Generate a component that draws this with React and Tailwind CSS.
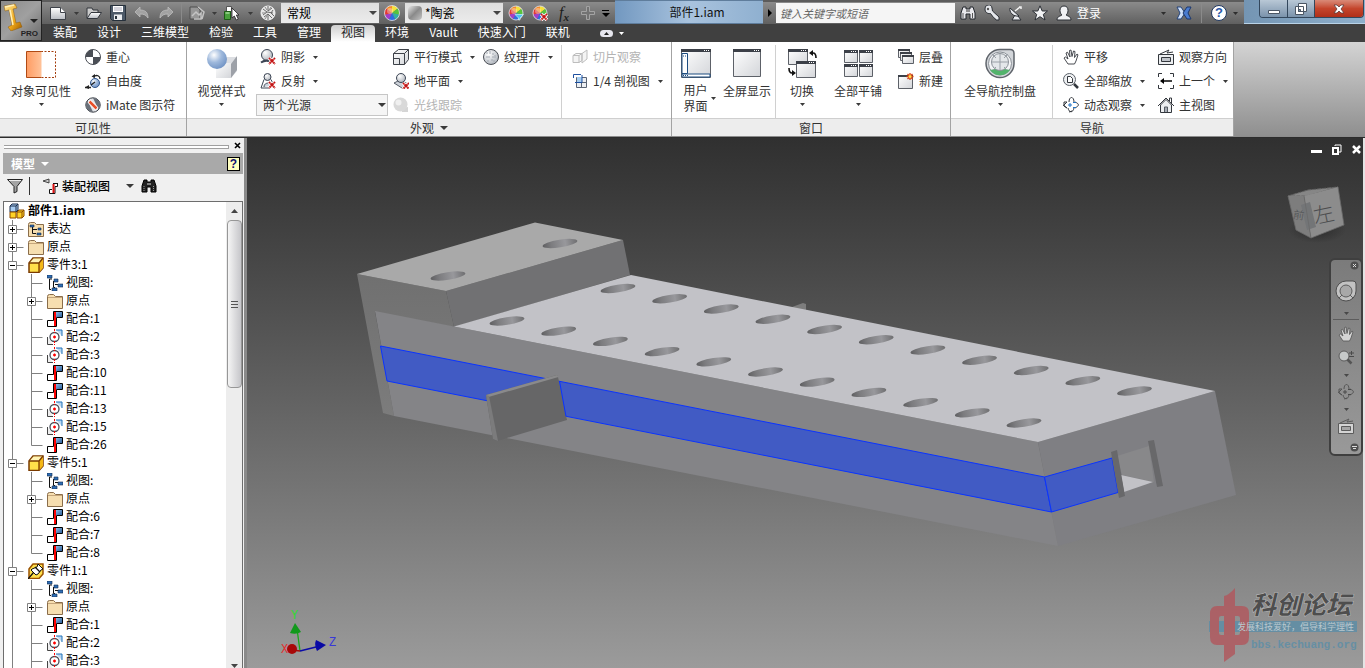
import { useState } from 'react'

/* ---------- icon helpers ---------- */

const Svg = ({ size = 16, w, h, children, className = '' }) => (
  <svg
    width={w || size}
    height={h || size}
    viewBox={`0 0 ${w || size} ${h || size}`}
    className={`shrink-0 ${className}`}
    fill="none"
    aria-hidden="true"
  >
    {children}
  </svg>
)

const Caret = ({ className = 'text-[#3a3a3a]' }) => (
  <Svg w={5} h={3} className={className}>
    <path d="M0 0h5L2.5 3z" fill="currentColor" />
  </Svg>
)

const BigCaret = ({ className = 'text-[#3a3a3a]' }) => (
  <Svg w={8} h={4} className={className}>
    <path d="M0 0h8L4 4z" fill="currentColor" />
  </Svg>
)

const Defs = () => (
  <svg width="0" height="0" className="absolute" aria-hidden="true">
    <defs>
      <linearGradient id="win" x1="0" y1="0" x2="1" y2="1">
        <stop offset="0" stopColor="#ffffff" />
        <stop offset="1" stopColor="#d3d5d9" />
      </linearGradient>
      <linearGradient id="metal" x1="0" y1="0" x2="0" y2="1">
        <stop offset="0" stopColor="#ffffff" />
        <stop offset="1" stopColor="#b8bcc2" />
      </linearGradient>
      <radialGradient id="ball" cx="0.35" cy="0.3" r="0.75">
        <stop offset="0" stopColor="#ffffff" />
        <stop offset="0.5" stopColor="#9fb9dc" />
        <stop offset="1" stopColor="#6f92c4" />
      </radialGradient>
      <radialGradient id="gray" cx="0.35" cy="0.3" r="0.8">
        <stop offset="0" stopColor="#ffffff" />
        <stop offset="1" stopColor="#aab0b8" />
      </radialGradient>
      <linearGradient id="gold" x1="0" y1="0" x2="1" y2="1">
        <stop offset="0" stopColor="#ffe79a" />
        <stop offset="0.6" stopColor="#f0a818" />
        <stop offset="1" stopColor="#9c5a00" />
      </linearGradient>
      <linearGradient id="orange" x1="0" y1="0" x2="1" y2="0">
        <stop offset="0" stopColor="#ff9c63" />
        <stop offset="1" stopColor="#ffc39a" />
      </linearGradient>
      <linearGradient id="blue" x1="0" y1="0" x2="1" y2="1">
        <stop offset="0" stopColor="#8ebbe4" />
        <stop offset="1" stopColor="#2c5f9a" />
      </linearGradient>
    </defs>
  </svg>
)

const RedX = ({ x = 9, y = 9 }) => (
  <>
    <path d={`M${x} ${y}l6 6m0-6l-6 6`} stroke="#fff" strokeWidth="3.5" />
    <path d={`M${x} ${y}l6 6m0-6l-6 6`} stroke="#c41414" strokeWidth="2" strokeDasharray="1.6 0.4" />
  </>
)

/* ---------- quick access icons ---------- */

const AppLogo = () => (
  <Svg w={22} h={28}>
    <path d="M2 3l11-2 2 4-4 1 3 14 4-1 2 5-11 4-3-4 4-2L7 7 3 8z" fill="url(#gold)" stroke="#8a5a10" strokeWidth="0.5" />
    <path d="M3 4l9-2M8 7l3 15" stroke="#fff0b8" strokeWidth="1.5" />
  </Svg>
)

const NewIcon = () => (
  <Svg>
    <path d="M.5 2.5h10l5 5v7H.5z" fill="url(#metal)" stroke="#3d4148" />
    <path d="M10.5 2.5v5h5" stroke="#3d4148" fill="#fff" />
  </Svg>
)

const OpenIcon = () => (
  <Svg>
    <path d="M1 13V3h5l1 2h5v3" fill="#ccc" stroke="#33373d" />
    <path d="M1 13.5L5 7.5h10.5l-4 6z" fill="url(#metal)" stroke="#33373d" />
  </Svg>
)

const SaveIcon = () => (
  <Svg>
    <path d="M.5.5h15v15h-13l-2-2z" fill="#4c5968" stroke="#26303b" />
    <path d="M3 1h10v6H3z" fill="#fff" />
    <path d="M4 3h8M4 5h8" stroke="#aab" />
    <path d="M4 9.5h8V15H4z" fill="#e9ecef" />
    <path d="M5 11h2v3H5z" fill="#26303b" />
  </Svg>
)

const UndoIcon = ({ flip }) => (
  <Svg className={flip ? '-scale-x-100' : ''}>
    <path d="M1 7l5-5v3c5 0 8 2 8 8-2-3-4-4-8-4v3z" fill="#a2a2a2" stroke="#bdbdbd" strokeWidth="0.8" />
  </Svg>
)

const UpdateIcon = () => (
  <Svg>
    <path d="M1 2h7l3 3v9H1z" fill="#979797" stroke="#4f4f4f" />
    <path d="M3 11l4-4 3 3 2-2v6H5M9 2l6 5-2 7" stroke="#c4c4c4" strokeWidth="1.5" />
  </Svg>
)

const SelectIcon = () => (
  <Svg>
    <path d="M2.5 1.5h5v5h-5z" fill="#fff" stroke="#555" />
    <path d="M.5 6.5h6v8h-6z" fill="#49a03c" stroke="#1d5c16" />
    <path d="M1.5 8h4" stroke="#c8f0bf" />
    <path d="M8 3v10l2.3-2 2 4 2-1-2-4H15z" fill="#fff" stroke="#222" strokeWidth="0.8" />
  </Svg>
)

const GlobeIcon = () => (
  <Svg>
    <circle cx="8" cy="8" r="7" fill="#e6e6e6" stroke="#f4f4f4" />
    <path
      d="M3 4l4 3-4 3M8 1v5l4-3M7 7l6 1M4 12l4-3 4 4M13 5l-2 3 3 3M8 9v6"
      stroke="#6a6a6a"
    />
    <path d="M5 2l2 3M11 2L9 5M2 8h4M5 14l2-3" stroke="#8a8a8a" />
  </Svg>
)

const wheelColors = ['#f6e13b', '#57c43c', '#33b1a2', '#2f6de0', '#a43ec9', '#e33a32', '#f58a2a']

const Wheel = ({ children, r = 7 }) => (
  <Svg>
    {wheelColors.map((color, i) => {
      const step = (Math.PI * 2) / wheelColors.length
      const a = i * step - Math.PI / 2
      const b = a + step
      return (
        <path
          key={color}
          d={`M8 8L${8 + r * Math.cos(a)} ${8 + r * Math.sin(a)}A${r} ${r} 0 0 1 ${8 + r * Math.cos(b)} ${8 + r * Math.sin(b)}z`}
          fill={color}
        />
      )
    })}
    <circle cx="8" cy="8" r={r} stroke="#e6e6ee" strokeWidth="0.8" />
    <circle cx="6" cy="6" r="3" fill="#fff" opacity="0.35" />
    {children}
  </Svg>
)

const WheelFilter = () => (
  <Wheel>
    <path d="M7 9.5h8.5L12 13v2h-1.5v-2z" fill="#4cc3f0" stroke="#e8f8ff" strokeWidth="0.6" />
  </Wheel>
)

const WheelClear = () => (
  <Wheel>
    <RedX />
  </Wheel>
)

const PlusIcon = () => (
  <Svg>
    <path d="M6.5 1.5h3v5h5v3h-5v5h-3v-5h-5v-3h5z" fill="#737373" stroke="#a3a3a3" />
  </Svg>
)

/* ---------- info center icons ---------- */

const Binoculars = ({ dark }) => (
  <Svg>
    <path
      d="M3 2h3v2h4V2h3l2 6v6h-5V9H6v5H1V8z"
      fill={dark ? '#222' : '#e8e8ec'}
      stroke={dark ? '#000' : '#22262c'}
    />
    <path d="M3 8v5M12.5 8v5" stroke={dark ? '#999' : '#555'} strokeDasharray={dark ? '1 1' : ''} />
    <path d="M6 6h4" stroke={dark ? '#ddd' : '#333'} />
  </Svg>
)

const KeyIcon = () => (
  <Svg>
    <path
      d="M1 4a3.5 3.5 0 0 1 7-1l.5 3 6.5 6v3h-3l-1.5-2-1-.5-3-4C3 9 1 7 1 4z"
      fill="#e6e8ec"
      stroke="#2b2f35"
    />
    <circle cx="4" cy="4" r="1.2" fill="#555" />
  </Svg>
)

const DishIcon = () => (
  <Svg>
    <path d="M2 3c-1 4 3 9 9 8zM7 10l-3 5h9l-3-4" fill="#e8eaee" stroke="#2b2f35" />
    <path d="M7 6l5-4M11 2h2v2" stroke="#f4f4f4" strokeWidth="1.5" />
  </Svg>
)

const StarIcon = () => (
  <Svg>
    <path
      d="M8 .8l2.2 5.200h5.300l-4.200 3.400L13 15 8 11.700 3 15l1.700-5.600L.5 6h5.300z"
      fill="#f2f3f5"
      stroke="#2b2f35"
    />
  </Svg>
)

const UserIcon = () => (
  <Svg>
    <path
      d="M8 1c3 0 4 2 4 4.500S11 9 10 10c1 1 5 1 5 5H1c0-4 4-4 5-5C5 9 4 8 4 5.500S5 1 8 1z"
      fill="#f0f1f4"
      stroke="#2b2f35"
    />
  </Svg>
)

const ExchangeIcon = () => (
  <Svg>
    <path d="M1 2h4l4 6-4 6H1l3-6z" fill="#cfe0f8" stroke="#24437a" />
    <path d="M15 2h-4L7 8l4 6h4l-3-6z" fill="#4a7cd0" stroke="#1c376c" />
  </Svg>
)

const HelpIcon = () => (
  <span className="flex size-4 items-center justify-center rounded-full border border-[#203860] bg-white font-['Liberation_Sans',sans-serif] text-[13px] leading-3 font-bold text-[#2b59a8]">
    ?
  </span>
)

/* ---------- ribbon icons ---------- */

const VisibilityIcon = () => (
  <Svg size={32}>
    <path d="M16 3.5h14.5v26H16" stroke="#a33d0c" strokeDasharray="2 1.5" />
    <path d="M1.5 3.5h15v26h-15z" fill="url(#orange)" />
    <path d="M16.5 3.5h-15v26h15" stroke="#b04a14" />
  </Svg>
)

const GravityIcon = () => (
  <Svg>
    <circle cx="8" cy="8" r="7.5" fill="#fff" stroke="#4a4e55" />
    <path d="M8 8V.5A7.5 7.5 0 0 0 .5 8zM8 8v7.5A7.5 7.5 0 0 0 15.5 8z" fill="#4a4e55" />
  </Svg>
)

const FreedomIcon = () => (
  <Svg>
    <circle cx="10" cy="10" r="4.5" fill="url(#ball)" stroke="#31568e" />
    <path d="M0 14.5h6M10 9l-4 3M8 4c4-3 7-1 7 2" stroke="#222" strokeWidth="1.3" />
    <path d="M0 14.5l4-2.5v4zM6.5 3.5L10 1v4z" fill="#222" />
  </Svg>
)

const IMateIcon = () => (
  <Svg>
    <circle cx="8" cy="8" r="7.2" fill="#e2e4e8" stroke="#3d4148" />
    <path d="M2.5 3.5A7 7 0 0 0 8 15zM13.5 12.5A7 7 0 0 0 8 1z" fill="#6a7079" />
    <path d="M4 4l8 8" stroke="#fff" strokeWidth="4" />
    <path d="M4.5 4.5l7 7" stroke="#e8502a" strokeWidth="2.5" />
  </Svg>
)

const VisualStyleIcon = () => (
  <Svg size={32}>
    <path d="M10 14l8-5h13v14l-6 7H10z" fill="#dcdee2" />
    <path d="M25 16l6-8v14l-6 8z" fill="#9da1a8" />
    <path d="M10 15h15v15H10z" fill="url(#win)" />
    <circle cx="11" cy="11" r="10" fill="url(#ball)" />
  </Svg>
)

const ShadowIcon = () => (
  <Svg>
    <circle cx="7" cy="6" r="5.5" fill="url(#gray)" stroke="#3d4655" />
    <path d="M1 13.5c3-2 7-2 9-1" stroke="#3d4655" strokeWidth="2" />
    <RedX />
  </Svg>
)

const ReflectIcon = () => (
  <Svg>
    <path d="M4 6.5L1 15h10M11 6.5l2 4" stroke="#3d4655" />
    <circle cx="7.5" cy="4" r="3.5" fill="url(#gray)" stroke="#3d4655" />
    <path d="M4 14c0-5 7-5 7-1" fill="#ccd3dd" stroke="#3d4655" />
    <RedX />
  </Svg>
)

const OrthoIcon = () => (
  <Svg>
    <path d="M.5 4.5l5-4h10v10l-4 5H.5z" fill="url(#win)" stroke="#3d4148" />
    <path d="M.5 4.5h11v11M11.5 4.5l4-4M.5 9.5h6v6" stroke="#3d4148" />
  </Svg>
)

const GroundIcon = () => (
  <Svg>
    <path d="M1 10l6-3 8 4-6 4z" fill="#cdd2d9" stroke="#555c66" />
    <circle cx="8" cy="5" r="4.5" fill="url(#gray)" stroke="#3d4655" />
    <RedX x={10} y={10} />
  </Svg>
)

const RayIcon = () => (
  <Svg>
    <path d="M9 11l6-1v5H9z" fill="#d5d5d5" />
    <circle cx="7.5" cy="7.5" r="7" fill="#d9d9d9" />
    <circle cx="5.5" cy="5.5" r="3" fill="#f0f0f0" />
  </Svg>
)

const TextureIcon = () => (
  <Svg>
    <circle cx="8" cy="8" r="7.5" fill="url(#gray)" stroke="#4a4e55" />
    <path
      d="M4 3v2M7 2v3M10 4v2M3 8h2M6 7v2M9 8h2M12 6v3M5 11v2M8 11h2M11 11v2"
      stroke="#a4aab3"
    />
  </Svg>
)

const SliceIcon = () => (
  <Svg>
    <path d="M1 6.5h6v7H1zM7 6.5l3-2v7l-3 2M1 6.5l3-2h6M10 4.5L15 1v9l-5 4z" fill="#f4f4f4" stroke="#bdbdbd" />
  </Svg>
)

const SectionIcon = () => (
  <Svg>
    <path d="M4.5 4.5h10v10h-10zM9.5 4.5v10M4.5 9.5h10" fill="#eceff3" stroke="#5a6474" />
    <path d="M5 4h5v6H5z" fill="#a6cdf0" />
    <path d="M1.5 5V1.5H9M3 9.5h7V2" stroke="#1d4fa0" />
  </Svg>
)

const WindowShape = ({ x, y, w, h, small }) => (
  <>
    <path d={`M${x + 0.5} ${y + 0.5}h${w - 1}v${h - 1}h-${w - 1}z`} fill="url(#win)" stroke="#5d6168" />
    <path d={`M${x} ${y}h${w}v${small ? 2 : 3}h-${w}z`} fill="#3c4048" />
    {!small && <path d={`M${x + w - 7} ${y + 1.5}h1m1 0h1m1 0h1`} stroke="#fff" />}
  </>
)

const UserInterfaceIcon = () => (
  <Svg size={32}>
    <WindowShape x={1} y={1} w={30} h={29} />
    <path d="M2 5.5h5.5v20H2z" fill="#fff" stroke="#1d4c80" />
    <path d="M2 26h28v3H2z" fill="#fff" stroke="#1d4c80" />
    <path d="M3 8h3M3 27.5h6" stroke="#1d4c80" strokeDasharray="1 1" />
  </Svg>
)

const FullScreenIcon = () => (
  <Svg size={32}>
    <WindowShape x={2} y={1} w={28} h={28} />
  </Svg>
)

const SwitchIcon = () => (
  <Svg size={32}>
    <WindowShape x={2} y={1} w={20} h={16} />
    <WindowShape x={10} y={13} w={20} h={17} />
    <path d="M25 5h2q3 0 3 5M8 25H6q-3 0-3-5" stroke="#111" strokeWidth="1.6" />
    <path d="M23 5l4-3v6zM10 25l-4-3v6z" fill="#111" />
  </Svg>
)

const TileIcon = () => (
  <Svg size={32}>
    <WindowShape x={2} y={2} w={14} h={13} />
    <WindowShape x={17} y={2} w={14} h={13} />
    <WindowShape x={2} y={16} w={14} h={13} />
    <WindowShape x={17} y={16} w={14} h={13} />
  </Svg>
)

const CascadeIcon = () => (
  <Svg>
    <WindowShape small x={0} y={0} w={12} h={9} />
    <WindowShape small x={2} y={3} w={12} h={9} />
    <WindowShape small x={4} y={6} w={12} h={9} />
  </Svg>
)

const NewWindowIcon = () => (
  <Svg>
    <WindowShape small x={0} y={2} w={15} h={14} />
    <path d="M12 0v7M8.5 3.5h7M9.5 1l5 5M14.5 1l-5 5" stroke="#d8400f" strokeWidth="1.3" />
    <circle cx="12" cy="3.5" r="1.5" fill="#ffe14d" />
  </Svg>
)

const SteeringIcon = () => (
  <Svg size={32}>
    <path d="M16 1.5h10q4 0 4 4V16A14 14 0 1 1 16 1.5z" fill="#d3d6da" stroke="#5f646b" strokeWidth="1.5" />
    <circle cx="16" cy="15.5" r="11.5" fill="#f4f5f7" stroke="#8a9097" />
    <path d="M6 22q10-3 20 0a12 12 0 0 1-20 0z" fill="#52b36b" />
    <circle cx="16" cy="14" r="8.5" fill="#e4e7ea" stroke="#8a9097" />
    <path d="M16 6v16M8 14h16M8 6l4 4M24 6l-4 4M9 22l3-3M23 22l-3-3" stroke="#9aa0a7" />
  </Svg>
)

const HandIcon = ({ light }) => (
  <Svg>
    <path
      d="M5 15L1 9l1.500-1L5 10 3 4l1.500-.8L7 8l-.5-6.500L8 1l1 6.500L10.500 2l1.500.5-.5 6L14 5l1 .8L13 12l-1.500 3z"
      fill={light ? '#d4d4d4' : '#fff'}
      stroke={light ? '#5c5c5c' : '#33373d'}
      strokeWidth="0.9"
    />
  </Svg>
)

const ZoomAllIcon = () => (
  <Svg>
    <circle cx="6.5" cy="6.5" r="6" fill="#eef0f2" stroke="#5b6068" />
    <path d="M4.5 3.5h3l2 2v4h-5z" fill="#fff" stroke="#33373d" />
    <path d="M11 11l4 4" stroke="#33373d" strokeWidth="2.5" />
  </Svg>
)

const OrbitIcon = ({ color = '#33373d', accent = '#2173c4' }) => (
  <Svg>
    <path
      d="M4 5H1v4l3 2M12 5c5 2 4 4 0 6M6 5c0-6 5-6 5 0M5 11c1 5 5 5 6 0"
      stroke={color}
    />
    <path d="M1 8l3-3M0 8l4 3M9 14l-3 1" stroke={color} />
    <path d="M5 8h4M7 6v4M10 5.5h3M10 10.5h3" stroke={accent} />
  </Svg>
)

const LookAtIcon = ({ light }) => (
  <Svg>
    <path d="M2 5l9-4-2 3 6-1" stroke={light ? '#5c5c5c' : '#33373d'} />
    <path
      d="M.5 5.5h15v10H.5z"
      fill={light ? '#d4d4d4' : '#eceef0'}
      stroke={light ? '#5c5c5c' : '#33373d'}
    />
    <path d="M3.5 8.5h9v4h-9z" fill={light ? '#a5a5a5' : '#c0c4ca'} stroke={light ? '#5c5c5c' : '#33373d'} />
  </Svg>
)

const PreviousIcon = () => (
  <Svg>
    <path d="M.5 4V.5H4M12 .5h3.500V4M15.500 12v3.500H12M4 15.500H.5V12" stroke="#33373d" />
    <path d="M5 8h9" stroke="#000" strokeWidth="1.5" />
    <path d="M2 8l4-3v6z" fill="#000" />
  </Svg>
)

const HomeIcon = () => (
  <Svg>
    <path d="M2.5 8v7.5h11V8L8 2.5z" fill="#eceef0" stroke="#33373d" />
    <path d="M0 9l8-8 8 8" stroke="#33373d" />
    <path d="M11.5 4V1h2v5" fill="#fff" stroke="#33373d" />
    <path d="M6.5 15v-5h3v5" fill="#a8adb5" stroke="#555b63" />
  </Svg>
)

/* ---------- browser tree icons ---------- */

const AssemblyIcon = () => (
  <Svg>
    <path d="M1 3l2-2h6v6l-2 2H1z" fill="#a9cdf2" stroke="#1b2c4a" />
    <path d="M1 3h6v6M7 3l2-2" stroke="#1b2c4a" />
    <path d="M1 9h6v6H1zM8 9l2-2h5v6l-2 2H8z" fill="#ffd326" stroke="#8a4a00" />
    <path d="M8 9h5v6M13 9l2-2" stroke="#8a4a00" />
  </Svg>
)

const FolderIcon = () => (
  <Svg>
    <path d="M.5 3.5q0-2 2-2h4l2 2h7v12H.5z" fill="#f6deb0" stroke="#8a6d4a" />
    <path d="M1 4.5h14" stroke="#c5a67c" />
  </Svg>
)

const RepresentationIcon = () => (
  <Svg>
    <path d="M.5 3.5q0-2 2-2h4l2 2h7v12H.5z" fill="#f6deb0" stroke="#8a6d4a" />
    <path d="M4.5 5v7.5H8M5 8.5h4" stroke="#111" />
    <path d="M2 4h4v2H2zM10 7h3v2h-3zM9 12h4v2H9z" fill="#2e6eb5" stroke="#12294a" strokeWidth="0.6" />
  </Svg>
)

const ViewsIcon = () => (
  <Svg>
    <path d="M2.5 4v10.5H4M2.5 4H5M6.5 6v6.5H8M7 5.5h2M8 9.5h4" stroke="#111" />
    <path d="M0 0h5v3H0zM7 4h4v3H7zM11 9h5v3h-5zM5 13h5v3H5z" fill="#2e6eb5" stroke="#12294a" strokeWidth="0.6" />
  </Svg>
)

const PartIcon = () => (
  <Svg>
    <path d="M1 6l4-5h10v10l-4 4.5H1z" fill="#ffe04a" stroke="#7a3a00" strokeWidth="1.5" />
    <path d="M1.5 6l4-4.5h9L11 6z" fill="#fff3b5" />
    <path d="M11 6l4-5v10l-4 4.5z" fill="#f5b816" />
    <path d="M1 6h10v9M11 6l4-5" stroke="#7a3a00" strokeWidth="1.3" />
  </Svg>
)

const PinnedPartIcon = () => (
  <Svg>
    <path d="M1 6l4-5h10v10l-4 4.5H1z" fill="#ffe04a" stroke="#9a5200" strokeWidth="1.5" />
    <path d="M10 1l5 5-2 1-3 4-2 1-5-5 1-1 5-2z" fill="#fff" stroke="#111" />
    <path d="M5.5 9.5L0 16M7 4l5 5" stroke="#111" strokeWidth="1.3" />
  </Svg>
)

const MateIcon = () => (
  <Svg>
    <path d="M9 1h6v5H9z" fill="url(#blue)" />
    <path d="M1 10h5v5H1z" fill="#fff" />
    <path d="M6.5 9.5V.5h9v6h-6v9H.5v-6h6" stroke="#000" />
    <path d="M7 1h2v14H7z" fill="#f00" />
  </Svg>
)

const AxisMateIcon = () => (
  <Svg>
    <path d="M9 1h6v6" fill="#b9d7f2" stroke="#2173b8" />
    <path d="M.5 8v7.5H6" stroke="#444" fill="#eee" />
    <circle cx="7.5" cy="8" r="4.5" fill="#fff" stroke="#4a4e58" strokeWidth="1.3" />
    <path d="M7.5 0v4M7.5 12v4" stroke="#f00" strokeDasharray="2 1" />
    <path d="M6 8h3M7.5 6.5v3" stroke="#f00" strokeWidth="1.3" />
  </Svg>
)

/* ---------- data ---------- */

const tabs = ['装配', '设计', '三维模型', '检验', '工具', '管理', '视图', '环境', 'Vault', '快速入门', '联机']

const treeRows = [
  { level: 1, icon: RepresentationIcon, label: '表达', box: '+' },
  { level: 1, icon: FolderIcon, label: '原点', box: '+' },
  { level: 1, icon: PartIcon, label: '零件3:1', box: '-' },
  { level: 2, icon: ViewsIcon, label: '视图:' },
  { level: 2, icon: FolderIcon, label: '原点', box: '+' },
  { level: 2, icon: MateIcon, label: '配合:1' },
  { level: 2, icon: AxisMateIcon, label: '配合:2' },
  { level: 2, icon: AxisMateIcon, label: '配合:3' },
  { level: 2, icon: MateIcon, label: '配合:10' },
  { level: 2, icon: MateIcon, label: '配合:11' },
  { level: 2, icon: AxisMateIcon, label: '配合:13' },
  { level: 2, icon: AxisMateIcon, label: '配合:15' },
  { level: 2, icon: MateIcon, label: '配合:26', last: true },
  { level: 1, icon: PartIcon, label: '零件5:1', box: '-' },
  { level: 2, icon: ViewsIcon, label: '视图:' },
  { level: 2, icon: FolderIcon, label: '原点', box: '+' },
  { level: 2, icon: MateIcon, label: '配合:6' },
  { level: 2, icon: MateIcon, label: '配合:7' },
  { level: 2, icon: MateIcon, label: '配合:8', last: true },
  { level: 1, icon: PinnedPartIcon, label: '零件1:1', box: '-' },
  { level: 2, icon: ViewsIcon, label: '视图:' },
  { level: 2, icon: FolderIcon, label: '原点', box: '+' },
  { level: 2, icon: MateIcon, label: '配合:1' },
  { level: 2, icon: AxisMateIcon, label: '配合:2' },
  { level: 2, icon: AxisMateIcon, label: '配合:3' },
]

/* ---------- title bar ---------- */

const BarButton = ({ label, children, className = 'w-4' }) => (
  <button type="button" aria-label={label} className={`flex h-full shrink-0 items-center justify-center ${className}`}>
    {children}
  </button>
)

const Divider = ({ className }) => (
  <div className={`flex h-full shrink-0 items-center justify-center ${className}`}>
    <div className="h-5 w-px bg-[#8a8a8a]" />
  </div>
)

const BarSelect = ({ label, value, swatch }) => (
  <div className="relative flex h-5 w-[98px] shrink-0 items-center bg-gradient-to-b from-[#dedede] to-[#ececec]">
    {swatch && <span className="ml-[3px] h-3.5 w-3.5 shrink-0 rounded-sm bg-gradient-to-br from-[#e8e8e8] via-[#8a8a8a] to-[#c4c4c4]" />}
    <select
      aria-label={label}
      className={`block h-5 w-full appearance-none bg-transparent text-[12px] leading-5 text-black outline-none ${swatch ? 'pl-[3px]' : 'pl-1.5'}`}
    >
      <option>{value}</option>
    </select>
    <div className="pointer-events-none absolute top-2 right-0.5">
      <BigCaret className="text-[#444]" />
    </div>
  </div>
)

const QuickAccess = () => (
  <div className="flex h-6 shrink-0 items-center border-t-2 border-[#5c5c5c] bg-gradient-to-b from-[#8b8b8b] to-[#606060] pl-2">
    <BarButton label="新建"><NewIcon /></BarButton>
    <BarButton label="新建选项" className="w-5"><Caret /></BarButton>
    <BarButton label="打开"><OpenIcon /></BarButton>
    <BarButton label="保存" className="ml-2 w-4"><SaveIcon /></BarButton>
    <BarButton label="放弃" className="ml-2 w-4"><UndoIcon /></BarButton>
    <BarButton label="重做" className="ml-2 w-4"><UndoIcon flip /></BarButton>
    <Divider className="w-[15px]" />
    <BarButton label="更新"><UpdateIcon /></BarButton>
    <BarButton label="更新选项" className="w-[19px]"><Caret /></BarButton>
    <BarButton label="选择"><SelectIcon /></BarButton>
    <BarButton label="选择选项" className="w-5"><Caret /></BarButton>
    <BarButton label="材料"><GlobeIcon /></BarButton>
    <div className="w-[5px]" />
    <BarSelect label="材料" value="常规" />
    <BarButton label="外观" className="w-[26px]"><Wheel r={7.5} /></BarButton>
    <BarSelect label="外观" value="*陶瓷" swatch />
    <BarButton label="调整" className="ml-[5px] w-4"><WheelFilter /></BarButton>
    <BarButton label="清除" className="ml-2 w-4"><WheelClear /></BarButton>
    <BarButton label="参数" className="ml-2 w-4">
      <span className="font-['Liberation_Serif',serif] text-[16px] leading-4 text-[#1c1c1c] italic">
        f<sub className="text-[11px] font-bold">x</sub>
      </span>
    </BarButton>
    <BarButton label="添加" className="ml-2 w-4"><PlusIcon /></BarButton>
    <BarButton label="自定义" className="w-[19px] flex-col gap-0.5">
      <span className="h-px w-[7px] bg-black" />
      <BigCaret className="text-black" />
    </BarButton>
  </div>
)

const InfoCenter = () => (
  <div className="flex h-6 shrink-0 items-center border-t-2 border-[#5c5c5c] bg-gradient-to-b from-[#8b8b8b] to-[#606060]">
    <BarButton label="展开" className="w-[13px]">
      <Svg w={4} h={8}><path d="M0 0l4 4-4 4z" fill="#000" /></Svg>
    </BarButton>
    <input
      type="search"
      aria-label="搜索"
      placeholder="键入关键字或短语"
      className="h-5 w-[179px] bg-[#f5f5f5] px-1 text-[11px] italic outline-none placeholder:text-[#666]"
    />
    <BarButton label="搜索" className="ml-[5px] w-4"><Binoculars /></BarButton>
    <BarButton label="速博应用中心" className="ml-2 w-4"><KeyIcon /></BarButton>
    <BarButton label="通讯中心" className="ml-2 w-4"><DishIcon /></BarButton>
    <BarButton label="收藏夹" className="ml-2 w-4"><StarIcon /></BarButton>
    <button type="button" className="ml-2 flex h-full w-[116px] items-center gap-[5px] text-[12px] text-white">
      <UserIcon />
      登录
      <span className="ml-auto pr-1.5"><Caret className="text-[#2d2d2d]" /></span>
    </button>
    <BarButton label="Exchange" className="ml-1 w-4"><ExchangeIcon /></BarButton>
    <Divider className="w-[19px]" />
    <BarButton label="帮助"><HelpIcon /></BarButton>
    <BarButton label="帮助选项" className="w-[17px]"><Caret className="text-[#2d2d2d]" /></BarButton>
  </div>
)

const WindowControls = () => (
  <div className="flex h-6 w-[121px] shrink-0 justify-end border-b border-[#b9d3e8] bg-gradient-to-r from-[#7495b3] to-[#8fb0cc] pr-px">
    <div className="flex h-[18px] overflow-hidden rounded-b border border-t-0 border-[#33475c]">
      <button type="button" aria-label="最小化" className="flex w-7 items-center justify-center border-r border-[#33475c] bg-gradient-to-b from-[#b9c8d6] to-[#7b93ab]">
        <Svg w={12} h={14}><path d="M.5 8.5h11v3H.5z" fill="#fff" stroke="#4b5664" /></Svg>
      </button>
      <button type="button" aria-label="还原" className="flex w-[27px] items-center justify-center border-r border-[#33475c] bg-gradient-to-b from-[#b9c8d6] to-[#7b93ab]">
        <Svg w={12} h={12}>
          <path d="M3.5.5h8v8h-8zM.5 3.5h8v8h-8z" fill="#fff" stroke="#4b5664" />
          <path d="M3.5 6.5h2v2h-2z" fill="#7b93ab" stroke="#4b5664" />
        </Svg>
      </button>
      <button type="button" aria-label="关闭" className="flex w-12 items-center justify-center bg-gradient-to-b from-[#d98a78] via-[#c4452c] to-[#b02f18]">
        <Svg w={12} h={12}>
          <path d="M1 2h3l2 2 2-2h3L8 6l3 4H8L6 8l-2 2H1l3-4z" fill="#fff" stroke="#5c3a38" strokeWidth="0.8" />
        </Svg>
      </button>
    </div>
  </div>
)

const TabBar = ({ active, onSelect }) => (
  <nav className="flex h-[18px] items-end bg-[#404040] pl-px">
    {tabs.map((tab) => (
      <button
        key={tab}
        type="button"
        onClick={() => onSelect(tab)}
        className={`h-[17px] px-2.5 pb-[3px] text-[12px] leading-[14px] ${
          tab === active ? 'rounded-t-sm bg-gradient-to-b from-[#cfcfcf] to-white text-[#222]' : 'text-white'
        }`}
      >
        {tab}
      </button>
    ))}
    <button type="button" aria-label="最小化功能区" className="ml-5 flex h-full items-center gap-1.5">
      <span className="flex h-[7px] w-[13px] items-center justify-center rounded-sm bg-[#e6e6ee]">
        <Svg w={5} h={3}><path d="M0 3h5L2.5 0z" fill="#222" /></Svg>
      </span>
      <Caret className="text-white" />
    </button>
  </nav>
)

/* ---------- ribbon ---------- */

const Panel = ({ title, more, children, className }) => (
  <section className={`flex shrink-0 flex-col border-r border-[#a3a3a3] bg-white ${className}`}>
    <div className="flex h-[76px] items-stretch pt-[3px]">{children}</div>
    <div className="flex h-[18px] items-center justify-center gap-1.5 border-t border-[#cfcfcf] bg-[#ededed] text-[12px] leading-4 text-[#333]">
      {title}
      {more && <BigCaret />}
    </div>
  </section>
)

const BigButton = ({ icon, label, caret = true, className }) => (
  <button type="button" className={`flex shrink-0 flex-col items-center pt-[3px] text-[12px] leading-4 whitespace-nowrap text-[#333] ${className}`}>
    {icon}
    <span className="mt-[3px]">{label}</span>
    {caret && <span className="mt-1"><Caret /></span>}
  </button>
)

const Column = ({ children, className = '' }) => (
  <div className={`flex shrink-0 flex-col ${className}`}>{children}</div>
)

const SmallButton = ({ icon, label, caret, disabled }) => (
  <button
    type="button"
    disabled={disabled}
    className={`flex h-6 items-center gap-[5px] text-[12px] whitespace-nowrap ${disabled ? 'text-[#b4b4b4]' : 'text-[#333]'}`}
  >
    {icon}
    {label}
    {caret && <span className="ml-[3px]"><Caret /></span>}
  </button>
)

const Rule = () => <div className="w-px shrink-0 bg-[#d0d0d0]" />

const Ribbon = () => (
  <div className="flex h-[95px] shrink-0 border-b border-[#8c8c8c] bg-gradient-to-b from-[#d4d4d4] to-[#8f8f8f]">
    <Panel title="可见性" className="w-[187px]">
      <BigButton icon={<VisibilityIcon />} label="对象可见性" className="w-[82px]" />
      <Column className="pl-[3px]">
        <SmallButton icon={<GravityIcon />} label="重心" />
        <SmallButton icon={<FreedomIcon />} label="自由度" />
        <SmallButton icon={<IMateIcon />} label="iMate 图示符" />
      </Column>
    </Panel>

    <Panel title="外观" more className="w-[485px]">
      <BigButton icon={<VisualStyleIcon />} label="视觉样式" className="w-[69px]" />
      <Column className="w-[137px]">
        <div className="flex flex-col pl-1">
          <SmallButton icon={<ShadowIcon />} label="阴影" caret />
          <SmallButton icon={<ReflectIcon />} label="反射" caret />
        </div>
        <div className="relative mt-px h-[22px] w-[132px]">
          <select aria-label="光源" className="block h-[22px] w-full appearance-none border border-[#c6c6c6] bg-[#f5f5f5] pl-1.5 text-[12px] leading-4 text-[#333] outline-none">
            <option>两个光源</option>
          </select>
          <div className="pointer-events-none absolute top-[9px] right-0.5"><BigCaret /></div>
        </div>
      </Column>
      <Column className="w-[90px]">
        <SmallButton icon={<OrthoIcon />} label="平行模式" caret />
        <SmallButton icon={<GroundIcon />} label="地平面" caret />
        <SmallButton icon={<RayIcon />} label="光线跟踪" disabled />
      </Column>
      <Column className="w-[78px]">
        <SmallButton icon={<TextureIcon />} label="纹理开" caret />
      </Column>
      <Rule />
      <Column className="pl-2.5">
        <SmallButton icon={<SliceIcon />} label="切片观察" disabled />
        <SmallButton icon={<SectionIcon />} label="1/4 剖视图" caret />
      </Column>
    </Panel>

    <Panel title="窗口" className="w-[279px]">
      <button type="button" className="flex w-[47px] shrink-0 flex-col items-center pt-[3px] text-[12px] leading-4 text-[#333]">
        <UserInterfaceIcon />
        <span className="mt-0.5 flex items-center gap-[3px] pl-2">
          <span>用户<br />界面</span>
          <Caret />
        </span>
      </button>
      <BigButton icon={<FullScreenIcon />} label="全屏显示" caret={false} className="w-[56px]" />
      <Rule />
      <BigButton icon={<SwitchIcon />} label="切换" className="w-[52px]" />
      <BigButton icon={<TileIcon />} label="全部平铺" className="w-[60px]" />
      <Column className="pl-2.5">
        <SmallButton icon={<CascadeIcon />} label="层叠" />
        <SmallButton icon={<NewWindowIcon />} label="新建" />
      </Column>
    </Panel>

    <Panel title="导航" className="w-[283px]">
      <BigButton icon={<SteeringIcon />} label="全导航控制盘" className="w-[98px]" />
      <div className="w-[3px]" />
      <Rule />
      <Column className="w-[95px] pl-2.5">
        <SmallButton icon={<HandIcon />} label="平移" />
        <SmallButton icon={<ZoomAllIcon />} label="全部缩放" caret />
        <SmallButton icon={<OrbitIcon />} label="动态观察" caret />
      </Column>
      <Column className="pl-2.5">
        <SmallButton icon={<LookAtIcon />} label="观察方向" />
        <SmallButton icon={<PreviousIcon />} label="上一个" caret />
        <SmallButton icon={<HomeIcon />} label="主视图" />
      </Column>
    </Panel>
  </div>
)

/* ---------- model browser ---------- */

const Branch = ({ box, last }) => (
  <Svg w={24} h={18}>
    <path d={`M8.5 0v${last ? 9.5 : 18}M8.5 9.5h11`} stroke="#808080" />
    {box && <path d="M4.5 5.5h8v8h-8z" fill="#fff" stroke="#808080" />}
    {box && <path d="M6 9.5h5" stroke="#000" />}
    {box === '+' && <path d="M8.5 7v5" stroke="#000" />}
  </Svg>
)

const TreeRow = ({ level, icon: RowIcon, label, box, last }) => (
  <li role="treeitem" aria-level={level + 1} className="flex h-[18px] shrink-0 items-center">
    {level === 2 && (
      <Svg w={19} h={18}><path d="M8.5 0v18" stroke="#808080" /></Svg>
    )}
    <Branch box={box} last={last} />
    <RowIcon />
    <span className="pl-[3px] pb-0.5 text-[12px] leading-4 text-black">{label}</span>
  </li>
)

const ModelBrowser = () => (
  <aside className="flex w-[247px] shrink-0 flex-col border-r-[3px] border-[#8a8a8a] bg-[#f0f0f0] pr-px pl-[3px]">
    <div className="flex h-[15px] shrink-0 items-center justify-between pr-0.5 pl-px">
      <div className="mt-0.5 h-1 w-[225px] border-y border-r border-[#a0a0a0] bg-white" />
      <button type="button" aria-label="关闭浏览器">
        <Svg w={7} h={7}><path d="M1 1l5 5M6 1L1 6" stroke="#000" strokeWidth="1.6" /></Svg>
      </button>
    </div>
    <div className="flex h-[21px] shrink-0 items-center bg-[#a9a9a9] pr-[3px] pl-2">
      <button type="button" className="flex items-center gap-1.5 text-[12px] font-bold text-white">
        模型
        <BigCaret className="text-white" />
      </button>
      <button type="button" aria-label="帮助" className="ml-auto flex h-[14px] w-[13px] items-center justify-center border border-black bg-[#ffffc0] font-['Liberation_Sans',sans-serif] text-[12px] leading-3 font-bold text-[#101070]">
        ?
      </button>
    </div>
    <div className="flex h-[27px] shrink-0 items-center pb-[3px] pl-1">
      <button type="button" aria-label="过滤器">
        <Svg>
          <path d="M.5 1.5h15L10 8.5v5L7 15V8.5z" fill="#a5a5a5" stroke="#222" />
          <path d="M2 2.5h12" stroke="#eee" />
        </Svg>
      </button>
      <div className="ml-1.5 h-[18px] w-px bg-[#333]" />
      <Svg className="ml-3">
        <path d="M1 3l6-2v4z" fill="#ccc" stroke="#222" strokeWidth="0.8" />
        <path d="M8 11h3v4H8zM13 5h3v3h-3z" fill="#fff" />
        <path d="M15.5 5.5H11M15.5 5v3.5H13v7H7.5v-4H10" stroke="#111" />
        <path d="M11.5 6v9" stroke="#e01010" strokeWidth="2" />
      </Svg>
      <div className="relative ml-1 w-[76px]">
        <select aria-label="浏览器视图" className="block w-full appearance-none bg-transparent text-[12px] leading-4 font-medium text-black outline-none">
          <option>装配视图</option>
        </select>
        <div className="pointer-events-none absolute inset-y-0 right-1 flex items-center"><BigCaret /></div>
      </div>
      <button type="button" aria-label="查找" className="ml-[3px]">
        <Binoculars dark />
      </button>
    </div>

    <div className="flex min-h-0 flex-1 border border-b-0 border-[#6d6d6d] bg-white">
      <ul role="tree" aria-label="模型" className="min-w-0 flex-1 overflow-hidden">
        <li role="treeitem" aria-level={1} className="flex h-[18px] items-center pl-[5px]">
          <AssemblyIcon />
          <span className="pl-[3px] pb-0.5 text-[12px] leading-4 font-bold text-black">部件1.iam</span>
        </li>
        {treeRows.map((row, i) => (
          <TreeRow key={i} {...row} />
        ))}
      </ul>
      <div className="flex w-4 shrink-0 flex-col items-center bg-[#ededed]">
        <div className="flex h-[18px] items-center"><Svg w={7} h={4}><path d="M0 4h7L3.5 0z" fill="#444" /></Svg></div>
        <div className="flex h-[168px] w-[15px] items-center justify-center rounded-sm border border-[#979797] bg-gradient-to-r from-[#f5f5f5] to-[#c6c6ca]">
          <Svg w={7} h={8}><path d="M0 1.5h7M0 4.5h7M0 7.5h7" stroke="#555" /></Svg>
        </div>
        <div className="mt-auto"><Svg w={7} h={4}><path d="M0 0h7L3.5 4z" fill="#444" /></Svg></div>
      </div>
    </div>
  </aside>
)

/* ---------- viewport ---------- */

const blockHoles = [[448, 276], [560, 243.5]]
const plateHoles = Array.from({ length: 11 }, (_, i) => [
  [618 + 51.65 * i, 288.5 + 10.25 * i],
  [507 + 51.7 * i, 321 + 10.2 * i],
]).flat()

const Hole = ({ x, y }) => (
  <ellipse cx={x} cy={y} rx="17.6" ry="3.8" fill="url(#hole)" transform={`rotate(-9 ${x} ${y})`} />
)

const Model = () => (
  <svg
    viewBox="247 138 1116 530"
    preserveAspectRatio="xMinYMin slice"
    className="h-full w-full"
    role="img"
    aria-label="部件1.iam"
  >
    <defs>
      <linearGradient id="hole">
        <stop offset="0" stopColor="#5f5f61" />
        <stop offset="0.25" stopColor="#7c7c7f" />
        <stop offset="0.65" stopColor="#98989c" />
        <stop offset="1" stopColor="#6e6e70" />
      </linearGradient>
      <linearGradient id="endcap" x1="0" y1="0" x2="0" y2="1">
        <stop offset="0" stopColor="#707070" />
        <stop offset="1" stopColor="#7c7c7c" />
      </linearGradient>
    </defs>

    {/* raised block */}
    <path d="M792 307l11-4 3 1v6h-14z" fill="#7d7d7d" />
    <path d="M357 274l89 17 8 36-79-15 19 104-11-3z" fill="url(#endcap)" />
    <path d="M446 291l177-51 7 35-176 52z" fill="#717173" />
    <path d="M357 274l178-51.5 88 17.5-177 51z" fill="#a9a9a9" />

    {/* long plate */}
    <path d="M375 311l79 15.5L1038 442l20 104-664-130z" fill="#848487" />
    <path d="M1038 442l177-51 21 104-178 51z" fill="#7f7f83" />
    <path d="M454 326.5L631 275l584 116-177 51z" fill="#c2c2c7" />
    {[...blockHoles, ...plateHoles].map(([x, y]) => (
      <Hole key={`${x}-${y}`} x={x} y={y} />
    ))}

    {/* selected faces */}
    <g fill="#415bc4" stroke="#0a34ff">
      <path d="M380.5 346L1044.5 477l7 35L387 381z" />
      <path d="M1044.5 477l67.5-19 6 34.5-66.5 19.5z" />
    </g>

    {/* side tab */}
    <path d="M486 395l71-20 1 2 9 43-70 21-4-2z" fill="#666667" />
    <path d="M486 395l71-20 1.5 2-70 20z" fill="#8a8a8b" />
    <path d="M486 395l3 1 9 45-5-2z" fill="#7b7b7c" />
    <path d="M559.5 381l6.5 35.5" stroke="#0a34ff" />

    {/* slot */}
    <path d="M1117 456l32-10 5 36-32-7z" fill="#88888a" />
    <path d="M1121 475l32 7-29 10z" fill="#c2c2c7" />
    <path d="M1111 452l6-2 8 46-6 2z" fill="#68686a" />
    <path d="M1148 441l6-1 9 46-6 1z" fill="#68686a" />
  </svg>
)

const ViewCube = () => (
  <svg width="62" height="58" viewBox="0 0 62 58" fill="none" role="img" aria-label="视图方位">
    <defs>
      <radialGradient id="cubeShadow">
        <stop offset="0" stopColor="#222" stopOpacity="0.7" />
        <stop offset="1" stopColor="#222" stopOpacity="0" />
      </radialGradient>
    </defs>
    <ellipse cx="32" cy="44" rx="29" ry="13" fill="url(#cubeShadow)" />
    <path d="M3 10l20-6 30-3-31 9z" fill="#868686" stroke="#646464" strokeDasharray="4 1" />
    <path d="M3 10l16 0 7 42-15-8z" fill="#7d7d7d" />
    <path d="M19 10l34-9 6 38-33 13z" fill="#8c8c8c" />
    <path d="M16 19l9-3 6 25-9 3z" fill="#737577" />
    <path d="M3 10l8 34 15 8M19 10l7 42M53 1l6 38-33 13" stroke="#6a6a6a" strokeWidth="0.8" />
    <text x="28" y="36" fontSize="21" fontWeight="300" fill="#4c4e50" transform="rotate(-12 38 28)">左</text>
    <text x="8" y="33" fontSize="11" fontWeight="300" fill="#4c4e50" transform="rotate(8 14 30)">前</text>
  </svg>
)

const Triad = () => (
  <svg width="60" height="54" viewBox="0 0 60 54" fill="none" className="font-['Liberation_Mono',monospace]" aria-hidden="true">
    <path d="M20 43l-3-22" stroke="#18a818" strokeWidth="1.3" />
    <path d="M20 43l20-5" stroke="#0a0aa8" strokeWidth="1.3" />
    <path d="M20 43l-8-1" stroke="#a80a0a" strokeWidth="1.3" />
    <path d="M15 15l6 9q-5 3-11 1z" fill="#12991c" />
    <path d="M46 37l-10-5q-2 5 1 11z" fill="#0808a4" />
    <circle cx="12" cy="41" r="5" fill="#a80808" />
    <text x="11" y="11" fontSize="12" fill="#2edc2e">Y</text>
    <text x="1" y="45" fontSize="12" fill="#e23030">X</text>
    <text x="49" y="38" fontSize="12" fill="#3838d8">Z</text>
  </svg>
)

const NavButton = ({ label, children, className = '' }) => (
  <button type="button" aria-label={label} className={`flex items-center justify-center ${className}`}>
    {children}
  </button>
)

const NavBar = () => (
  <div className="flex h-[198px] w-[34px] flex-col items-center rounded-md border-2 border-[#3f3f3f] bg-gradient-to-b from-[#7b7b7b] to-[#999] pt-px">
    <NavButton label="关闭导航栏" className="mr-0.5 self-end">
      <Svg w={9} h={9}>
        <circle cx="4.5" cy="4.5" r="4" fill="#4f4f4f" />
        <path d="M3 3l3 3M6 3L3 6" stroke="#ddd" />
      </Svg>
    </NavButton>
    <NavButton label="控制盘" className="mt-2.5">
      <Svg size={22}>
        <path d="M11 1h7q3 0 3 3v7A10 10 0 1 1 11 1z" fill="#c2c2c2" stroke="#4f4f4f" />
        <circle cx="11" cy="11" r="6" fill="#a8a8a8" stroke="#5c5c5c" />
        <path d="M4 18l3-3M18 18l-3-3" stroke="#5c5c5c" />
      </Svg>
    </NavButton>
    <Caret className="mt-2.5 text-[#484848]" />
    <div className="mt-1 h-px w-[26px] bg-[#5c5c5c]" />
    <NavButton label="平移" className="mt-1.5"><HandIcon light /></NavButton>
    <NavButton label="缩放" className="mt-2">
      <Svg>
        <circle cx="6" cy="6" r="5" fill="#c6c9c9" stroke="#5c5c5c" />
        <path d="M9.5 9.5l4 4" stroke="#555" strokeWidth="2.5" />
        <path d="M11 3h5M13.5 1v4M11 6.5h5" stroke="#4a4a4a" />
      </Svg>
    </NavButton>
    <Caret className="mt-2 text-[#484848]" />
    <NavButton label="动态观察" className="mt-[7px]"><OrbitIcon color="#555" accent="#4a4a4a" /></NavButton>
    <Caret className="mt-2 text-[#484848]" />
    <NavButton label="观察方向" className="mt-[7px]"><LookAtIcon light /></NavButton>
    <NavButton label="自定义导航栏" className="mt-auto mr-0.5 mb-0.5 self-end">
      <Svg w={9} h={9}>
        <circle cx="4.5" cy="4.5" r="4" fill="#4f4f4f" />
        <path d="M2 3.5h5M3 5.5h3" stroke="#ddd" />
      </Svg>
    </NavButton>
  </div>
)

const Watermark = () => (
  <svg width="154" height="96" viewBox="0 -16 154 96" className="opacity-80" role="img" aria-label="科创论坛">
    <path d="M0 33h148v11H0z" fill="#5b8ea8" />
    <path
      d="M15 8q5-1 11-8v18h7q7 0 7 7v24q0 8-7 8h-7v9l-11 8V57H8q-7 0-7-8V26q0-8 7-8h7zM15 28h-3q-2 0-2 2v15q0 2 2 2h3zM26 28v19h3q2 0 2-2V30q0-2-2-2z"
      fill="#b2565c"
      fillRule="evenodd"
    />
    <text x="42" y="26" fontSize="25" fontWeight="700" fontStyle="italic" fill="#3f3f3f" stroke="#c4c4c4" strokeWidth="1" paintOrder="stroke">
      科创论坛
    </text>
    <text x="28" y="42" fontSize="9" fill="#c3d6de">发展科技爱好，倡导科学理性</text>
    <text x="42" y="60" fontSize="11" fontWeight="700" fill="#5b8ea8" className="font-['Liberation_Mono',monospace]">
      bbs.kechuang.org
    </text>
  </svg>
)

const DocumentControls = () => (
  <div className="flex items-center gap-2.5">
    <button type="button" aria-label="最小化文档">
      <Svg w={11} h={11}><path d="M0 6h11v3H0z" fill="#fff" /></Svg>
    </button>
    <button type="button" aria-label="还原文档">
      <Svg w={10} h={11}>
        <path d="M3 2V1h6v7H7" stroke="#fff" />
        <path d="M1 4h5v6H1z" stroke="#fff" strokeWidth="2" />
      </Svg>
    </button>
    <button type="button" aria-label="关闭文档">
      <Svg w={9} h={9}><path d="M1 1l7 7M8 1L1 8" stroke="#fff" strokeWidth="2.5" /></Svg>
    </button>
  </div>
)

const Viewport = () => (
  <main className="relative min-w-0 flex-1 overflow-hidden border-r-2 border-[#e4e4e4] bg-gradient-to-b from-[#303030] to-[#9b9b9b]">
    <Model />
    <div className="absolute top-1.5 right-0.5"><DocumentControls /></div>
    <div className="absolute top-[48px] right-4"><ViewCube /></div>
    <div className="absolute top-[120px] right-0"><NavBar /></div>
    <div className="absolute bottom-1.5 left-[33px]"><Triad /></div>
    <div className="absolute right-0 bottom-0"><Watermark /></div>
  </main>
)

const App = () => {
  const [tab, setTab] = useState('视图')

  return (
    <div className="flex h-screen flex-col overflow-hidden bg-[#2c2c2c] font-['Noto_Sans_CJK_SC',sans-serif]">
      <Defs />
      <header className="flex shrink-0 bg-[#404040]">
        <button
          type="button"
          aria-label="应用程序菜单"
          className="relative h-[41px] w-[42px] shrink-0 border border-[#222] bg-gradient-to-br from-[#8a8a8a] via-[#a0a0a0] to-[#6a6a6a]"
        >
          <span className="absolute top-0.5 left-px"><AppLogo /></span>
          <span className="absolute top-[18px] right-[3px]"><BigCaret className="text-[#222]" /></span>
          <span className="absolute right-[3px] bottom-px font-['Liberation_Sans',sans-serif] text-[8px] leading-[10px] font-bold text-[#222]">
            PRO
          </span>
        </button>
        <div className="min-w-0 flex-1">
          <div className="flex h-6">
            <QuickAccess />
            <h1 className="flex min-w-0 flex-1 items-center justify-center border-y border-[#5f7d9c] bg-gradient-to-r from-[#7298c0] via-[#a9c3de] to-[#8fb0d0] pl-4 text-[12px] text-[#111]">
              部件1.iam
            </h1>
            <InfoCenter />
            <WindowControls />
          </div>
          <TabBar active={tab} onSelect={setTab} />
        </div>
      </header>
      <Ribbon />
      <div className="mt-px flex min-h-0 flex-1">
        <ModelBrowser />
        <Viewport />
      </div>
    </div>
  )
}

export default App
